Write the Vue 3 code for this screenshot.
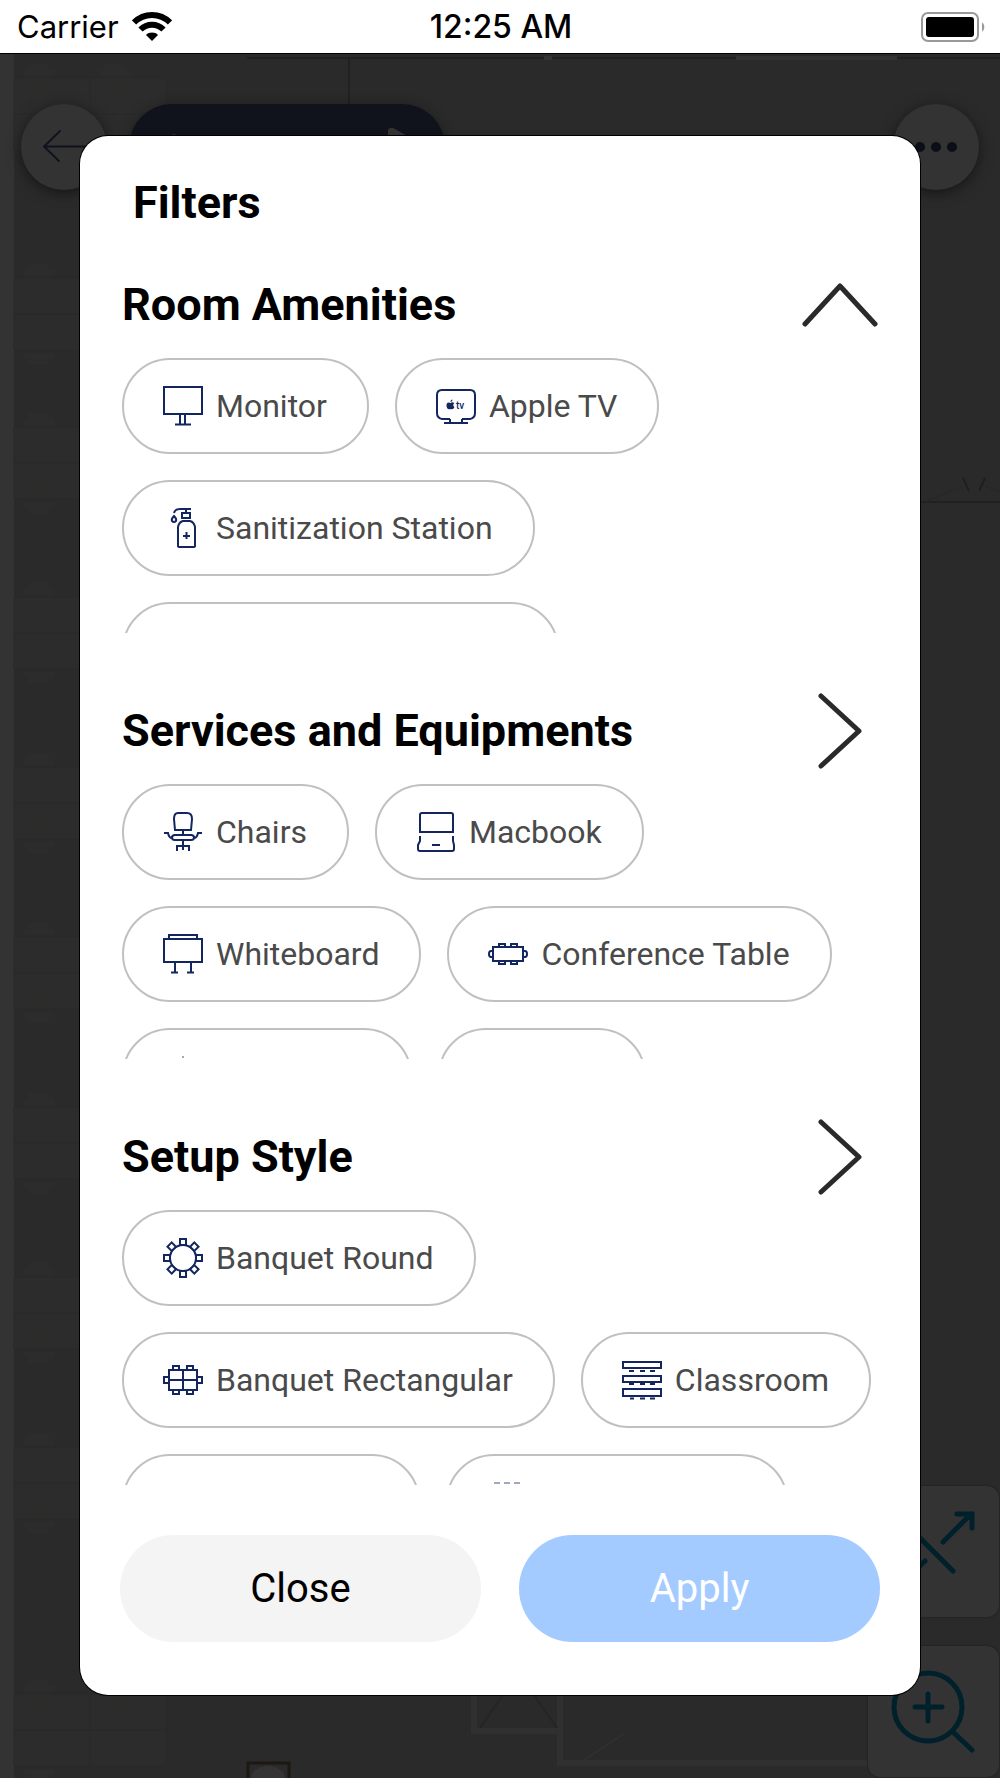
<template>
  <div class="screen">
    <header class="status-bar">
      <div class="carrier">
        <span>Carrier</span>
        <svg class="wifi" viewBox="0 0 40 30" aria-hidden="true">
          <path d="M2 10.5C12 0.5 28 0.5 38 10.5" />
          <path d="M8.5 17.5C15 11 25 11 31.5 17.5" />
          <path class="wifi-dot" d="M20 29L14 23C17 19.8 23 19.8 26 23Z" />
        </svg>
      </div>
      <time class="clock">12:25 AM</time>
      <svg class="battery" viewBox="0 0 64 30" aria-label="Battery full">
        <rect class="battery-shell" x="1" y="1" width="56" height="28" rx="6" />
        <rect x="5" y="5" width="48" height="20" rx="3" />
        <path class="battery-cap" d="M61 10.5C64 12 64 18 61 19.5Z" />
      </svg>
    </header>

    <main class="stage">
      <div class="backdrop">
        <svg class="floor-plan" viewBox="0 0 1000 1725" preserveAspectRatio="xMidYMin slice" aria-hidden="true">
          <rect width="14" height="1725" fill="#333333" />
          <g v-for="y in deskRows" :key="y" :transform="`translate(14 ${y})`">
            <path d="M0 0H152V72H0ZM0 36H152M76 0V72" fill="#2c2c2c" stroke="#292929" />
            <path d="M14 -14H34V-8H40V-2H10V-8H14ZM10 75H40V80H34V86H14V80H10Z" fill="#2c2c2c" />
            <path d="M90 -14H110V-8H116V-2H86V-8H90Z" fill="#2c2c2c" />
            <circle cx="25" cy="10" r="3" fill="#2c2d26" />
            <circle cx="19" cy="26" r="3" fill="#2c2d26" />
            <circle cx="25" cy="61" r="3" fill="#2c2d26" />
            <circle cx="101" cy="10" r="3" fill="#2c2d26" />
          </g>
          <path d="M247 4H1000M349 4V60M915 448H1000" fill="none" stroke="#23211d" stroke-width="2" />
          <path d="M544 4H552M736 4H897" fill="none" stroke="#343434" stroke-width="4" />
          <path d="M963 424L969 437M985 424L979 437" fill="none" stroke="#1f1f1f" stroke-width="2" />
          <path d="M925 448L963 432M985 432L1000 438" fill="none" stroke="#262626" />
          <path d="M474 1630V1677H557M560 1630V1709H867" fill="none" stroke="#303030" stroke-width="6" />
          <path d="M480 1674L505 1638M532 1638L557 1674" fill="none" stroke="#252525" stroke-width="2" />
          <path d="M584 1706L625 1679" fill="none" stroke="#303030" stroke-width="2" />
          <path d="M248 1725V1709H289V1725" fill="none" stroke="#1c1812" stroke-width="3" />
          <ellipse cx="268" cy="1724" rx="17" ry="12" fill="#343434" />
        </svg>

        <div class="map-header">
          <button class="round-button" type="button" aria-label="Back">
            <svg viewBox="0 0 86 86"><path d="M39 27L23 42.5L38 57M23 42.5H64" /></svg>
          </button>
          <button class="place-pill" type="button" aria-label="Location">
            <svg viewBox="0 0 316 86">
              <path d="M259 60V26Q261 22 266 25L294 41Q298 44 294 47L264 63Z" />
              <circle cx="45" cy="32" r="2" />
            </svg>
          </button>
          <button class="round-button more" type="button" aria-label="More options">
            <svg viewBox="0 0 86 86">
              <circle cx="27" cy="43" r="5" />
              <circle cx="43" cy="43" r="5" />
              <circle cx="59" cy="43" r="5" />
            </svg>
          </button>
        </div>

        <div class="map-tools">
          <button class="tool-button" type="button" aria-label="Fit to screen">
            <svg viewBox="0 0 131 131">
              <path d="M75 56L103 28M89 28H104V42M85 85L27 27M57 75L27 104M27 89V104H42" />
            </svg>
          </button>
          <button class="tool-button" type="button" aria-label="Zoom in">
            <svg viewBox="0 0 131 131">
              <circle cx="60" cy="61" r="34" />
              <path d="M47 61H74M60 48V75M85 86L104 104" />
            </svg>
          </button>
        </div>
      </div>

      <section class="dialog" role="dialog" aria-modal="true" aria-labelledby="dialog-title">
        <h1 id="dialog-title" class="dialog-title">Filters</h1>

        <div class="groups">
          <section v-for="group in groups" :key="group.name" class="group">
            <div class="group-header">
              <h2 class="group-title">{{ group.name }}</h2>
              <button
                class="toggle"
                :class="{ open: group.open }"
                type="button"
                :aria-label="group.name"
                :aria-expanded="group.open"
                @click="group.open = !group.open"
              >
                <svg viewBox="0 0 76 76"><path d="M19 3L57 38L19 73" /></svg>
              </button>
            </div>

            <div class="chips">
              <button
                v-for="item in group.items"
                :key="item.label"
                class="chip"
                :class="{ selected: selected.includes(item.label) }"
                type="button"
                :aria-pressed="selected.includes(item.label)"
                @click="toggleItem(item.label)"
              >
                <svg class="chip-icon" viewBox="0 0 40 40" aria-hidden="true">
                  <path v-if="icons[item.icon]" :d="icons[item.icon]" />
                  <template v-if="item.icon === 'appleTv'">
                    <path class="solid" d="M14.5 17C12 15.5 10.5 17 10.5 19.5C10.5 22 12 24 14.5 23C17 24 18 22 18.5 21C16.8 20 17 18 18.3 17.2C17 15.5 15.5 16.5 14.5 17ZM14.5 16C14.5 14.5 15.3 13.7 16.5 13.5C16.5 15 15.8 16 14.5 16Z" />
                    <text x="20" y="23">tv</text>
                  </template>
                  <template v-if="item.icon === 'round'">
                    <circle cx="20" cy="20" r="13" />
                    <rect
                      v-for="n in 8"
                      :key="n"
                      class="seat"
                      x="17"
                      y="1"
                      width="6"
                      height="6"
                      :transform="`rotate(${n * 45} 20 20)`"
                    />
                  </template>
                </svg>
                <span>{{ item.label }}</span>
              </button>
              <div
                v-for="(peek, index) in group.peeks"
                :key="index"
                class="chip"
                :style="{ width: peek.width + 'px' }"
                aria-hidden="true"
              >
                <svg class="chip-icon faded" viewBox="0 0 40 40"><path :d="peek.icon" /></svg>
              </div>
            </div>
          </section>
        </div>

        <footer class="actions">
          <button class="action close" type="button">Close</button>
          <button class="action apply" type="button">Apply</button>
        </footer>
      </section>
    </main>
  </div>
</template>

<script setup>
  import { reactive, ref } from 'vue'

  const deskRows = [24, 224, 373, 543, 713, 883, 1053, 1223, 1393, 1640]

  const icons = {
    monitor: 'M1 1H39V28H1ZM17 28V38M22 28V38M12 38.5H28',
    appleTv: 'M14 33H6Q1 32 1 27V9Q1 4 6 4H34Q39 4 39 9V27Q39 32 34 33H26M14 33V36M26 33V36M8 37H32',
    sanitizer: 'M15 38V19Q16 14 20 13H27Q31 14 32 19V38Q32 39 30 39H17Q15 39 15 38ZM19 5H27V10H19ZM23 1V5M28 1H17Q12 1 11 5M11 8Q8 11 9 13Q11 15 13 13Q14 11 11 8ZM20 28H27M23.5 24V31',
    chair: 'M12 18L11 7Q11 1 15 1H24Q29 1 29 7L28 18ZM20 18V23M12 23H28Q31 23 31 25.5Q31 28 28 28H12Q9 28 9 25.5Q9 23 12 23ZM1 21H5Q6 26 9 26M39 21H35Q34 26 31 26M20 28V38M14 39V34H26V39',
    macbook: 'M6 1H35Q37 1 37 3V20H4V3Q4 1 6 1ZM4 24V29L2 33V37Q2 39 4 39H36Q38 39 38 37V33L37 29V24M16 33H24',
    whiteboard: 'M1 5H39V28H1ZM6 5V1H34V5M12 28V38M28 28V38M8 38.5H15M24 38.5H31',
    table: 'M5 13H35V27H5ZM11 12V10H17V12M23 12V10H29V12M11 28V30H17V28M23 28V30H29V28M5 17H3Q1 17 1 20Q1 23 3 23H5M35 17H37Q39 17 39 20Q39 23 37 23H35',
    rectangular: 'M6 10H34V30H6ZM20 10V30M6 20H34M10 10V6H16V10M24 10V6H30V10M10 30V34H16V30M24 30V34H30V30M6 17H1V23H6M34 17H39V23H34',
    classroom: 'M1 2H39V8H1ZM1 16H39V22H1ZM1 29H39V36H1ZM7 11H12M18 11H23M28 11H33M7 24H12M18 24H23M28 24H33M8 38.5H12M18 38.5H23M28 38.5H33'
  }

  const groups = reactive([
    {
      name: 'Room Amenities',
      open: true,
      items: [
        { label: 'Monitor', icon: 'monitor' },
        { label: 'Apple TV', icon: 'appleTv' },
        { label: 'Sanitization Station', icon: 'sanitizer' }
      ],
      peeks: [{ width: 437, icon: '' }]
    },
    {
      name: 'Services and Equipments',
      open: false,
      items: [
        { label: 'Chairs', icon: 'chair' },
        { label: 'Macbook', icon: 'macbook' },
        { label: 'Whiteboard', icon: 'whiteboard' },
        { label: 'Conference Table', icon: 'table' }
      ],
      peeks: [
        { width: 290, icon: 'M19 1H21' },
        { width: 208, icon: '' }
      ]
    },
    {
      name: 'Setup Style',
      open: false,
      items: [
        { label: 'Banquet Round', icon: 'round' },
        { label: 'Banquet Rectangular', icon: 'rectangular' },
        { label: 'Classroom', icon: 'classroom' }
      ],
      peeks: [
        { width: 298, icon: '' },
        { width: 342, icon: 'M7 1H13M17 1H23M27 1H33' }
      ]
    }
  ])

  const selected = ref([])

  function toggleItem(label) {
    selected.value = selected.value.includes(label)
      ? selected.value.filter((name) => name !== label)
      : [...selected.value, label]
  }
</script>

<style>
body {
  background-color: #2a2a2a;
}
</style>

<style scoped>
.screen {
  min-height: 100vh;
  display: flex;
  flex-direction: column;
  font-family: Roboto, sans-serif;
  color: #000000;
}

button {
  font: inherit;
  color: inherit;
  border: none;
  padding: 0;
  background: none;
  cursor: pointer;
}

svg {
  display: block;
}

.status-bar {
  display: grid;
  grid-template-columns: 1fr auto 1fr;
  align-items: center;
  height: 53px;
  padding: 0 15px 0 17px;
  background-color: #ffffff;
  font-family: Inter, sans-serif;
  font-size: 31px;
  box-sizing: border-box;
}

.carrier {
  display: flex;
  align-items: center;
  gap: 13px;
}

.wifi {
  width: 40px;
  height: 30px;
  fill: none;
  stroke: #000000;
  stroke-width: 6;
}

.wifi-dot {
  fill: #000000;
  stroke: none;
}

.clock {
  font-size: 32px;
  font-weight: 500;
}

.battery {
  width: 64px;
  height: 30px;
  justify-self: end;
}

.battery-shell {
  fill: none;
  stroke: #999999;
  stroke-width: 2;
}

.battery-cap {
  fill: #999999;
}

.stage {
  position: relative;
  flex: 1;
  padding: 83px 8% 82px;
}

.backdrop {
  position: absolute;
  inset: 0;
  display: flex;
  flex-direction: column;
  justify-content: space-between;
  overflow: hidden;
  background-color: #2a2a2a;
  border-top: 1px solid #000000;
  box-sizing: border-box;
}

.floor-plan {
  position: absolute;
  inset: 0;
  width: 100%;
  height: 100%;
}

.map-header {
  position: relative;
  display: flex;
  gap: 22px;
  padding: 50px 21px;
}

.round-button {
  width: 86px;
  height: 86px;
  border-radius: 43px;
  background-color: #333333;
  box-shadow: 0 3px 14px rgba(0, 0, 0, 0.5);
}

.round-button path {
  fill: none;
  stroke: #10131f;
  stroke-width: 2;
  stroke-linecap: round;
  stroke-linejoin: round;
}

.round-button circle {
  fill: #0c0f18;
}

.more {
  margin-left: auto;
}

.place-pill {
  width: 316px;
  height: 86px;
  border-radius: 43px;
  background-color: #10131b;
  box-shadow: 0 3px 14px rgba(0, 0, 0, 0.4);
  fill: #333333;
}

.map-tools {
  position: relative;
  display: flex;
  flex-direction: column;
  align-items: flex-end;
  gap: 29px;
  padding: 0 1px 1px;
}

.tool-button {
  width: 131px;
  height: 131px;
  border-radius: 12px;
  background-color: #333333;
  box-shadow: 0 0 2px rgba(0, 0, 0, 0.5);
}

.tool-button svg {
  fill: none;
  stroke: #00202b;
  stroke-width: 5;
  stroke-linecap: round;
}

.dialog {
  position: relative;
  border-radius: 28px;
  padding: 41px 40px 53px;
  background-color: #ffffff;
  box-shadow: 0 0 0 1px #000000;
}

.dialog-title {
  margin: 0 0 38px;
  padding: 0 13px;
  font-size: 45px;
  line-height: 52px;
  font-weight: 700;
}

.groups {
  display: flex;
  flex-direction: column;
  gap: 60px;
  padding: 0 2px;
}

.group-header {
  display: flex;
  align-items: center;
  justify-content: space-between;
  margin-bottom: 15px;
}

.group-title {
  margin: 0;
  font-size: 45px;
  line-height: 52px;
  font-weight: 700;
}

.toggle {
  width: 76px;
  height: 76px;
}

.toggle path {
  fill: none;
  stroke: #2a2a2c;
  stroke-width: 5;
  stroke-linecap: round;
  stroke-linejoin: round;
}

.toggle.open svg {
  transform: rotate(-90deg);
}

.chips {
  display: flex;
  flex-wrap: wrap;
  align-content: flex-start;
  gap: 26px;
  height: 275px;
  overflow: hidden;
}

.chip {
  display: flex;
  align-items: center;
  gap: 13px;
  height: 96px;
  padding: 0 40px 0 39px;
  border: 2px solid #c0c0c0;
  border-radius: 48px;
  color: #4a4a4a;
  font-size: 32px;
  white-space: nowrap;
  box-sizing: border-box;
}

.chip.selected {
  border-color: #0b1b56;
}

.chip-icon {
  width: 40px;
  height: 40px;
  flex-shrink: 0;
  fill: none;
  stroke: #13265f;
  stroke-width: 2;
}

.chip-icon.faded {
  opacity: 0.4;
}

.chip-icon .solid,
.chip-icon text {
  fill: #13265f;
  stroke: none;
}

.chip-icon text {
  font-size: 10px;
  font-weight: 500;
}

.chip-icon .seat {
  fill: #ffffff;
}

.actions {
  display: flex;
  gap: 38px;
  margin-top: 50px;
}

.action {
  flex: 1;
  height: 107px;
  border-radius: 54px;
  font-size: 40px;
}

.close {
  background-color: #f4f4f4;
}

.apply {
  background-color: #a3cbff;
  color: #ffffff;
}
</style>
